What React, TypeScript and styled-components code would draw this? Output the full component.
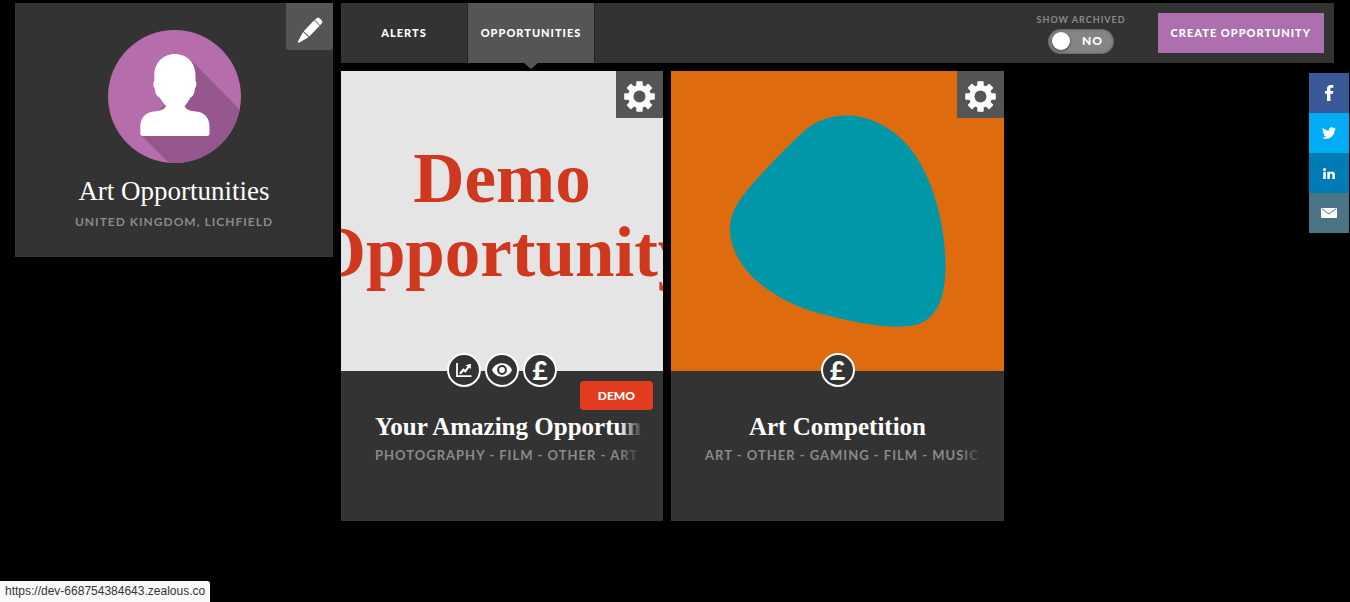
import React, { useState } from "react";
import styled, { createGlobalStyle } from "styled-components";
import { FaTwitter } from "react-icons/fa";

const color = {
  page: "#000000",
  panel: "#333333",
  raised: "#555555",
  muted: "#8a8a8a",
  accent: "#ae6fae",
  demo: "#e23b20",
};

const sans = `Lato, "Liberation Sans", sans-serif`;
const serif = `"Liberation Serif", "Times New Roman", serif`;

const GlobalStyle = createGlobalStyle`
  * { box-sizing: border-box; }
  body {
    margin: 0;
    background: ${color.page};
    color: #ffffff;
    font-family: ${sans};
  }
  h1, h2, p { margin: 0; }
  a { color: inherit; text-decoration: none; }
  button { border: 0; padding: 0; color: inherit; font-family: inherit; cursor: pointer; }
  svg { display: block; }
`;

const Page = styled.div`
  display: grid;
  grid-template-columns: 318fr 993fr;
  align-items: start;
  gap: 8px;
  padding: 3px 16px 0 15px;
`;

const ProfileCard = styled.aside`
  position: relative;
  display: flex;
  flex-direction: column;
  align-items: center;
  padding: 27px 12px 26px;
  background: ${color.panel};
`;

const CornerButton = styled.button<{ $round?: boolean }>`
  position: absolute;
  top: 0;
  right: 0;
  display: flex;
  align-items: center;
  justify-content: center;
  width: 47px;
  height: 47px;
  padding-top: ${(p) => (p.$round ? "7px" : "3px")};
  background: ${color.raised};
  border-radius: ${(p) => (p.$round ? "0 0 2px 2px" : "0")};
`;

const ProfileName = styled.h1`
  margin-top: 12px;
  font: 400 27px/32px ${serif};
`;

const ProfilePlace = styled.p`
  margin-top: 6px;
  color: ${color.muted};
  font-size: 12px;
  font-weight: 700;
  line-height: 18px;
  letter-spacing: 1px;
  text-transform: uppercase;
`;

const Main = styled.main`
  display: flex;
  flex-direction: column;
  gap: 8px;
  min-width: 0;
`;

const Toolbar = styled.header`
  display: flex;
  align-items: center;
  height: 60px;
  padding-right: 10px;
  background: ${color.panel};
`;

const Tabs = styled.nav`
  display: flex;
  align-self: stretch;
  margin-right: auto;
`;

const Tab = styled.a<{ $active?: boolean }>`
  position: relative;
  display: flex;
  align-items: center;
  justify-content: center;
  width: 127px;
  padding-bottom: 2px;
  border-right: 1px solid #222222;
  background: ${(p) => (p.$active ? color.raised : "transparent")};
  font-size: 11px;
  font-weight: 900;
  letter-spacing: 1px;
  text-transform: uppercase;

  &::after {
    content: ${(p) => (p.$active ? '""' : "none")};
    position: absolute;
    top: 100%;
    left: 50%;
    margin-left: -7px;
    border: 7px solid transparent;
    border-top: 6px solid ${color.raised};
    border-bottom: 0;
  }
`;

const Switch = styled.label`
  display: flex;
  flex-direction: column;
  align-items: center;
  margin-right: 32px;
  padding-bottom: 2px;
  color: ${color.muted};
  font-size: 9px;
  font-weight: 700;
  line-height: 18px;
  letter-spacing: 1px;
  text-transform: uppercase;
  cursor: pointer;
`;

const SwitchInput = styled.input`
  position: absolute;
  opacity: 0;
`;

const SwitchTrack = styled.span<{ $on: boolean }>`
  display: flex;
  flex-direction: ${(p) => (p.$on ? "row-reverse" : "row")};
  align-items: center;
  justify-content: space-between;
  width: 66px;
  height: 25px;
  padding: 0 11px 0 4px;
  border-radius: 13px;
  background: #858585;
  box-shadow: inset 0 0 3px rgba(0, 0, 0, 0.5);
  color: #ffffff;
  font-size: 12px;
  font-weight: 900;
`;

const SwitchKnob = styled.span`
  width: 18px;
  height: 18px;
  border-radius: 50%;
  background: #ffffff;
  box-shadow: 0 1px 3px rgba(0, 0, 0, 0.5);
`;

const CreateButton = styled.button`
  height: 40px;
  padding: 0 13px 2px;
  background: ${color.accent};
  font-size: 11px;
  font-weight: 900;
  letter-spacing: 1px;
  text-transform: uppercase;
`;

const CardGrid = styled.section`
  display: grid;
  grid-template-columns: 322fr 333fr 322fr;
  gap: 8px;
`;

const Card = styled.article`
  position: relative;
  min-width: 0;
  background: ${color.panel};
`;

const Cover = styled.div<{ $bg: string }>`
  display: flex;
  align-items: center;
  justify-content: center;
  height: 300px;
  overflow: hidden;
  background: ${(p) => p.$bg};
`;

const CoverText = styled.p`
  flex: none;
  padding-bottom: 12px;
  color: #d0371f;
  font: 700 71px/74px ${serif};
  text-align: center;
  white-space: pre-line;
`;

const CardBody = styled.div`
  position: relative;
  display: flow-root;
  min-height: 150px;
  padding: 0 20px;
`;

const BadgeRow = styled.div`
  display: flex;
  justify-content: center;
  gap: 4px;
  height: 34px;
  margin-top: -18px;
`;

const Badge = styled.span`
  display: flex;
  align-items: center;
  justify-content: center;
  width: 34px;
  height: 34px;
  border: 2px solid #ffffff;
  border-radius: 50%;
  background: ${color.panel};
  font-size: 26px;
  font-weight: 900;
  line-height: 30px;
`;

const DemoTag = styled.span`
  position: absolute;
  top: 10px;
  right: 10px;
  padding: 0 18px;
  border-radius: 4px;
  background: ${color.demo};
  font-size: 12px;
  font-weight: 900;
  line-height: 29px;
`;

const FadeLine = styled.div`
  position: relative;
  padding: 0 14px;
  overflow: hidden;
  text-align: center;
  white-space: nowrap;

  &::after {
    content: "";
    position: absolute;
    top: 0;
    right: 0;
    bottom: 0;
    width: 24px;
    background: linear-gradient(to right, rgba(51, 51, 51, 0), ${color.panel});
  }
`;

const CardTitle = styled(FadeLine).attrs({ as: "h2" })`
  margin-top: 24px;
  font: 700 25px/32px ${serif};
`;

const CardTags = styled(FadeLine).attrs({ as: "p" })`
  margin-top: 2px;
  color: ${color.muted};
  font-size: 13px;
  font-weight: 700;
  line-height: 20px;
  letter-spacing: 1px;
  text-transform: uppercase;
`;

const ShareBar = styled.nav`
  position: fixed;
  top: 73px;
  right: 1px;
  display: flex;
  flex-direction: column;
`;

const ShareLink = styled.a<{ $bg: string }>`
  display: flex;
  align-items: center;
  justify-content: center;
  width: 40px;
  height: 40px;
  background: ${(p) => p.$bg};
`;

const StatusBubble = styled.a`
  position: fixed;
  bottom: 0;
  left: 0;
  padding: 0 5px;
  border-radius: 0 3px 0 0;
  background: #fafafa;
  && { color: #333333; }
  font: 400 12px/21px "Liberation Sans", Arial, sans-serif;
`;

const Avatar = () => (
  <svg width="133" height="133" viewBox="0 0 133 133" role="img" aria-label="Profile picture">
    <defs>
      <clipPath id="avatar-circle">
        <circle cx="66.5" cy="66.5" r="66.5" />
      </clipPath>
    </defs>
    <g clipPath="url(#avatar-circle)">
      <rect width="133" height="133" fill="#b56dab" />
      <path d="M84 31 L140 88 V140 H68 L33 105 L60 70 Z" fill="#95578d" />
      <path
        fill="#ffffff"
        d="M67 24 C79 24 87.500 33 87.500 45 V51 C89 52 88.500 57 87 58 C86.500 64 85 66 82.500 67.500 C80 72 78 75 76.500 76 C78 80 82 81 88 81.500 C97 82.500 101.500 88 101.500 97 V103 C101.500 105 101 106 99 106 H35 C33 106 32.300 105 32.300 103 V97 C32.300 88 37 82.500 46 81.500 C52 81 56 80 58 76 C56 74 54 71 51.500 67.500 C49 66 47 64 46.700 58 C45 57 45 52 46.300 51 V45 C46.300 33 55 24 67 24 Z"
      />
    </g>
  </svg>
);

const PencilIcon = () => (
  <svg width="26" height="26" viewBox="0 0 26 26" aria-hidden="true">
    <g fill="#ffffff">
      <path d="M17.800 2.800 L20 0.900 C22 -0.500 26.500 4 25 6 L23.200 8.200 Z" />
      <path d="M17.200 3.300 L22.700 8.700 L12.200 19.600 L6.700 14.200 Z" />
      <path d="M6.100 14.900 L11.500 20.300 L2 25.700 L0.700 25 Z" />
    </g>
  </svg>
);

const GearIcon = () => (
  <svg width="31" height="31" viewBox="-15.500 -15.500 31 31" aria-hidden="true">
    <g fill="#ffffff">
      {[0, 45, 90, 135].map((angle) => (
        <rect key={angle} x="-3.200" y="-15.300" width="6.400" height="30.600" rx="0.800" transform={`rotate(${angle})`} />
      ))}
      <circle r="11.400" />
    </g>
    <circle r="6" fill={color.raised} />
  </svg>
);

const ChartIcon = () => (
  <svg width="16" height="16" viewBox="0 0 16 16" fill="none" stroke="#ffffff" aria-hidden="true">
    <path d="M1 1 V14.200 H15.500" strokeWidth="1.800" />
    <path d="M4 11.800 L7.300 7.800 L9.300 9.300 L12.500 4.800" strokeWidth="2.200" />
    <path d="M9.500 3.200 L15 1.800 L14.800 7 Z" fill="#ffffff" stroke="none" />
  </svg>
);

const EyeIcon = () => (
  <svg width="20" height="14" viewBox="0 0 20 14" aria-hidden="true">
    <path fill="#ffffff" d="M0 7 C2 2.500 5.500 0.300 10 0.300 S18 2.500 20 7 C18 11.500 14.500 13.700 10 13.700 S2 11.500 0 7 Z" />
    <circle cx="10" cy="7" r="3.900" fill="#ffffff" stroke={color.panel} strokeWidth="2" />
  </svg>
);

const FacebookIcon = () => (
  <svg width="9" height="16" viewBox="0 0 9 16" fill="#ffffff" aria-hidden="true">
    <path d="M2 16 V8.700 H0 V5.900 H2 V4 C2 1.300 3.400 0 5.900 0 H8.300 V2.800 H6.700 C5.700 2.800 5.400 3.200 5.400 4 V5.900 H8.300 L7.900 8.700 H5.400 V16 Z" />
  </svg>
);

const LinkedInIcon = () => (
  <svg width="12" height="11" viewBox="0 0 12 11" fill="#ffffff" aria-hidden="true">
    <circle cx="1.500" cy="1.500" r="1.500" />
    <path d="M0.200 3.800 H2.800 V11 H0.200 Z" />
    <path d="M4.300 3.800 H6.800 V4.800 C7.300 4 8.100 3.600 9.100 3.600 C11.200 3.600 11.900 4.900 11.900 7 V11 H9.300 V7.400 C9.300 6.400 9.100 5.800 8.200 5.800 C7.300 5.800 6.900 6.400 6.900 7.400 V11 H4.300 Z" />
  </svg>
);

const MailIcon = () => (
  <svg width="16" height="10" viewBox="0 0 16 10" aria-hidden="true">
    <rect width="16" height="10" rx="1" fill="#ffffff" />
    <path d="M1 0.800 L8 6 L15 0.800" fill="none" stroke="#4b7585" strokeWidth="1" />
  </svg>
);

const BlobArt = () => (
  <svg width="333" height="300" viewBox="0 0 333 300" role="img" aria-label="Teal abstract shape">
    <path
      fill="#0098a8"
      d="M177 44.500 C205 45 232 64 246 87 C265 117 275 160 274.500 198 C274 222 269 237 259 246 C249 256 234 256 218 255.500 C195 254 170 248 147 242 C120 235 92 219 76 200 C66 188 59 172 59 158 C59 140 69 127 84 110 C102 91 120 71 138 56 C150 48 162 44.500 177 44.500 Z"
    />
  </svg>
);

export default function App() {
  const [archived, setArchived] = useState(false);

  return (
    <>
      <GlobalStyle />
      <Page>
        <ProfileCard>
          <CornerButton $round type="button" aria-label="Edit profile">
            <PencilIcon />
          </CornerButton>
          <Avatar />
          <ProfileName>Art Opportunities</ProfileName>
          <ProfilePlace>United Kingdom, Lichfield</ProfilePlace>
        </ProfileCard>

        <Main>
          <Toolbar>
            <Tabs>
              <Tab href="#alerts">Alerts</Tab>
              <Tab href="#opportunities" $active aria-current="page">Opportunities</Tab>
            </Tabs>
            <Switch>
              Show archived
              <SwitchInput
                type="checkbox"
                role="switch"
                checked={archived}
                onChange={(e) => setArchived(e.target.checked)}
              />
              <SwitchTrack $on={archived}>
                <SwitchKnob />
                {archived ? "Yes" : "No"}
              </SwitchTrack>
            </Switch>
            <CreateButton type="button">Create opportunity</CreateButton>
          </Toolbar>

          <CardGrid>
            <Card>
              <Cover $bg="#e5e5e5">
                <CoverText>{"Demo\nOpportunity"}</CoverText>
              </Cover>
              <CornerButton type="button" aria-label="Opportunity settings">
                <GearIcon />
              </CornerButton>
              <CardBody>
                <BadgeRow>
                  <Badge><ChartIcon /></Badge>
                  <Badge><EyeIcon /></Badge>
                  <Badge>£</Badge>
                </BadgeRow>
                <DemoTag>DEMO</DemoTag>
                <CardTitle>Your Amazing Opportunity</CardTitle>
                <CardTags>Photography - Film - Other - Art</CardTags>
              </CardBody>
            </Card>

            <Card>
              <Cover $bg="#de6c0e">
                <BlobArt />
              </Cover>
              <CornerButton type="button" aria-label="Opportunity settings">
                <GearIcon />
              </CornerButton>
              <CardBody>
                <BadgeRow>
                  <Badge>£</Badge>
                </BadgeRow>
                <CardTitle>Art Competition</CardTitle>
                <CardTags>Art - Other - Gaming - Film - Music</CardTags>
              </CardBody>
            </Card>
          </CardGrid>
        </Main>
      </Page>

      <ShareBar aria-label="Share">
        <ShareLink href="#facebook" $bg="#3b5998" aria-label="Facebook"><FacebookIcon /></ShareLink>
        <ShareLink href="#twitter" $bg="#00acf4" aria-label="Twitter"><FaTwitter size={14} /></ShareLink>
        <ShareLink href="#linkedin" $bg="#007bb6" aria-label="LinkedIn"><LinkedInIcon /></ShareLink>
        <ShareLink href="#email" $bg="#4b7585" aria-label="Email"><MailIcon /></ShareLink>
      </ShareBar>

      <StatusBubble href="https://dev-668754384643.zealous.co">https://dev-668754384643.zealous.co</StatusBubble>
    </>
  );
}
